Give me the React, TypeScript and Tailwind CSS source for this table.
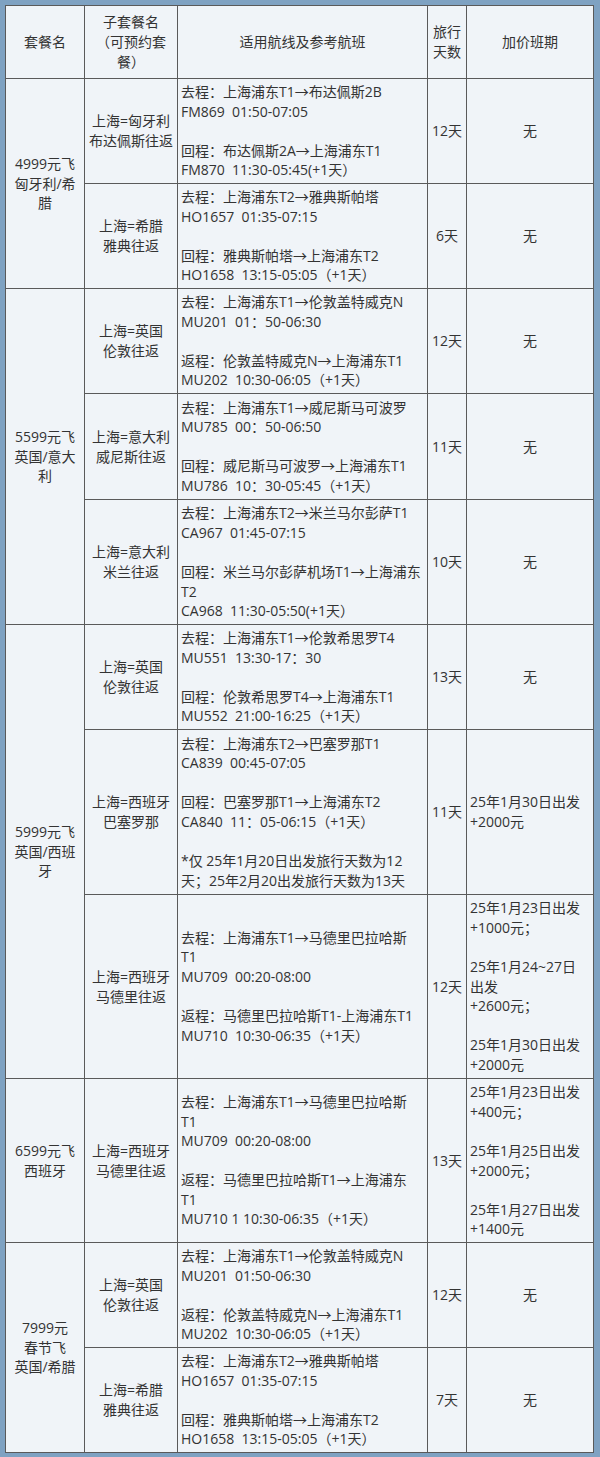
type Sub = {
  name: string[];
  route: string[];
  days: string;
  extra: string[];
  h: string;
};

type Pkg = {
  title: string[];
  subs: Sub[];
};

const packages: Pkg[] = [
  {
    title: ["4999元飞", "匈牙利/希", "腊"],
    subs: [
      {
        name: ["上海=匈牙利", "布达佩斯往返"],
        route: ["去程：上海浦东T1→布达佩斯2B", "FM869  01:50-07:05", "", "回程：布达佩斯2A→上海浦东T1", "FM870  11:30-05:45(+1天）"],
        days: "12天",
        extra: ["无"],
        h: "h-[105px]",
      },
      {
        name: ["上海=希腊", "雅典往返"],
        route: ["去程：上海浦东T2→雅典斯帕塔", "HO1657  01:35-07:15", "", "回程：雅典斯帕塔→上海浦东T2", "HO1658  13:15-05:05（+1天）"],
        days: "6天",
        extra: ["无"],
        h: "h-[105px]",
      },
    ],
  },
  {
    title: ["5599元飞", "英国/意大", "利"],
    subs: [
      {
        name: ["上海=英国", "伦敦往返"],
        route: ["去程：上海浦东T1→伦敦盖特威克N", "MU201  01：50-06:30", "", "返程：伦敦盖特威克N→上海浦东T1", "MU202  10:30-06:05（+1天）"],
        days: "12天",
        extra: ["无"],
        h: "h-[105px]",
      },
      {
        name: ["上海=意大利", "威尼斯往返"],
        route: ["去程：上海浦东T1→威尼斯马可波罗", "MU785  00：50-06:50", "", "回程：威尼斯马可波罗→上海浦东T1", "MU786  10：30-05:45（+1天）"],
        days: "11天",
        extra: ["无"],
        h: "h-[106px]",
      },
      {
        name: ["上海=意大利", "米兰往返"],
        route: ["去程：上海浦东T2→米兰马尔彭萨T1", "CA967  01:45-07:15", "", "回程：米兰马尔彭萨机场T1→上海浦东", "T2", "CA968  11:30-05:50(+1天）"],
        days: "10天",
        extra: ["无"],
        h: "h-[125px]",
      },
    ],
  },
  {
    title: ["5999元飞", "英国/西班", "牙"],
    subs: [
      {
        name: ["上海=英国", "伦敦往返"],
        route: ["去程：上海浦东T1→伦敦希思罗T4", "MU551  13:30-17：30", "", "回程：伦敦希思罗T4→上海浦东T1", "MU552  21:00-16:25（+1天）"],
        days: "13天",
        extra: ["无"],
        h: "h-[105px]",
      },
      {
        name: ["上海=西班牙", "巴塞罗那"],
        route: [
          "去程：上海浦东T2→巴塞罗那T1",
          "CA839  00:45-07:05",
          "",
          "回程：巴塞罗那T1→上海浦东T2",
          "CA840  11：05-06:15（+1天）",
          "",
          "*仅 25年1月20日出发旅行天数为12",
          "天；25年2月20出发旅行天数为13天",
        ],
        days: "11天",
        extra: ["25年1月30日出发", "+2000元"],
        h: "h-[165px]",
      },
      {
        name: ["上海=西班牙", "马德里往返"],
        route: ["去程：上海浦东T1→马德里巴拉哈斯", "T1", "MU709  00:20-08:00", "", "返程：马德里巴拉哈斯T1-上海浦东T1", "MU710  10:30-06:35（+1天）"],
        days: "12天",
        extra: ["25年1月23日出发", "+1000元；", "", "25年1月24~27日", "出发", "+2600元；", "", "25年1月30日出发", "+2000元"],
        h: "h-[184px]",
      },
    ],
  },
  {
    title: ["6599元飞", "西班牙"],
    subs: [
      {
        name: ["上海=西班牙", "马德里往返"],
        route: ["去程：上海浦东T1→马德里巴拉哈斯", "T1", "MU709  00:20-08:00", "", "返程：马德里巴拉哈斯T1→上海浦东", "T1", "MU710 1 10:30-06:35（+1天）"],
        days: "13天",
        extra: ["25年1月23日出发", "+400元；", "", "25年1月25日出发", "+2000元；", "", "25年1月27日出发", "+1400元"],
        h: "h-[164px]",
      },
    ],
  },
  {
    title: ["7999元", "春节飞", "英国/希腊"],
    subs: [
      {
        name: ["上海=英国", "伦敦往返"],
        route: ["去程：上海浦东T1→伦敦盖特威克N", "MU201  01:50-06:30", "", "返程：伦敦盖特威克N→上海浦东T1", "MU202  10:30-06:05（+1天）"],
        days: "12天",
        extra: ["无"],
        h: "h-[105px]",
      },
      {
        name: ["上海=希腊", "雅典往返"],
        route: ["去程：上海浦东T2→雅典斯帕塔", "HO1657  01:35-07:15", "", "回程：雅典斯帕塔→上海浦东T2", "HO1658  13:15-05:05（+1天）"],
        days: "7天",
        extra: ["无"],
        h: "h-[105px]",
      },
    ],
  },
];

const Lines = ({ lines }: { lines: string[] }) => (
  <>
    {lines.map((l, i) => (
      <div key={i} className="whitespace-pre">
        {l === "" ? "\u00a0" : l}
      </div>
    ))}
  </>
);

const cell = "border border-[#5a5a5a] align-middle px-[3px] py-[3px]";

export default function App() {
  return (
    <div
      className="w-[600px] bg-[#7fa2c2] pt-[5px] pl-[5px] pr-[7px] pb-[5px] text-[#333] text-[14px] leading-[19.6px]"
      style={{ fontFamily: '"Open Sans", "Noto Sans CJK SC", sans-serif' }}
    >
      <table className="w-[588px] table-fixed border-collapse bg-[#f0f4f8]">
        <colgroup>
          <col className="w-[79px]" />
          <col className="w-[93px]" />
          <col className="w-[250px]" />
          <col className="w-[39px]" />
          <col className="w-[127px]" />
        </colgroup>
        <thead>
          <tr className="h-[73px] leading-[20px]">
            <th className={`${cell} text-center font-normal`}>套餐名</th>
            <th className={`${cell} text-center font-normal`}>
              <Lines lines={["子套餐名", "（可预约套", "餐）"]} />
            </th>
            <th className={`${cell} text-center font-normal`}>适用航线及参考航班</th>
            <th className={`${cell} text-center font-normal`}>
              <Lines lines={["旅行", "天数"]} />
            </th>
            <th className={`${cell} text-center font-normal`}>加价班期</th>
          </tr>
        </thead>
        <tbody>
          {packages.map((p) =>
            p.subs.map((s, i) => (
              <tr key={p.title.join("") + i} className={s.h}>
                {i === 0 && (
                  <td rowSpan={p.subs.length} className={`${cell} text-center`}>
                    <Lines lines={p.title} />
                  </td>
                )}
                <td className={`${cell} text-center`}>
                  <Lines lines={s.name} />
                </td>
                <td className={`${cell} text-left`}>
                  <Lines lines={s.route} />
                </td>
                <td className={`${cell} text-center`}>{s.days}</td>
                <td className={`${cell} ${s.extra.length > 1 ? "text-left" : "text-center"}`}>
                  <Lines lines={s.extra} />
                </td>
              </tr>
            ))
          )}
        </tbody>
      </table>
    </div>
  );
}
